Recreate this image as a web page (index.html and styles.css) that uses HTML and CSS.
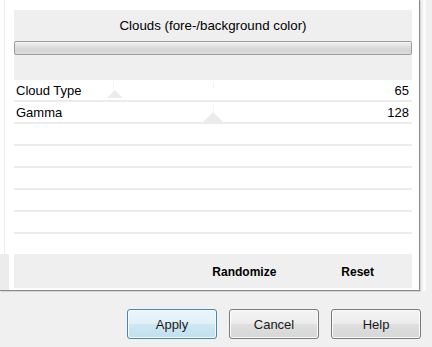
FILE: index.html
```html
<!DOCTYPE html>
<html lang="en">
<head>
  <meta charset="UTF-8" />
  <title>Clouds</title>
  <link rel="stylesheet" href="styles.css">
</head>
<body>
  <div class="top">
    <div class="panel">
      <div class="gutter">
        <div class="gutter-line"></div>
        <div class="gutter-foot"></div>
      </div>

      <div class="content">
        <div class="header">
          <div class="title">Clouds (fore-/background color)</div>
          <div class="bar"></div>
        </div>

        <div class="rows">
          <div class="row">
            <span>Cloud Type</span><span>65</span>
            <i class="tick" style="left: 99px"></i>
            <i class="thumb" style="left: 93px"></i>
            <i class="tick" style="left: 199px"></i>
          </div>
          <div class="row">
            <span>Gamma</span><span>128</span>
            <i class="tick" style="left: 199px"></i>
            <i class="thumb big" style="left: 189px"></i>
          </div>
          <div class="row"></div>
          <div class="row"></div>
          <div class="row"></div>
          <div class="row"></div>
          <div class="row"></div>
          <div class="row"></div>
        </div>

        <div class="footer">
          <span>Randomize</span>
          <span>Reset</span>
        </div>
      </div>
    </div>
    <div class="edge"></div>
  </div>

  <div class="buttons">
    <button class="btn default">Apply</button>
    <button class="btn">Cancel</button>
    <button class="btn">Help</button>
  </div>
</body>
</html>
```

FILE: styles.css
```css
body {
  margin: 0;
  width: 432px;
  height: 347px;
  overflow: hidden;
  background: #f0f0f0;
  font-family: 'Liberation Sans', Arial, sans-serif;
  font-size: 13px;
  color: #000;
}

.top {
  display: flex;
  height: 291px;
}

.panel {
  display: flex;
  width: 419px;
  height: 290px;
  background: #fff;
  border-right: 1px solid #8a8a8a;
  border-bottom: 1px solid #8a8a8a;
  box-shadow: 1px 1px 0 #d6d6d6;
}

.gutter {
  width: 14px;
  display: flex;
  flex-direction: column;
}

.gutter-line {
  flex: 1;
  margin-left: 4px;
  border-left: 1px solid #ececec;
}

.gutter-foot {
  width: 9px;
  height: 36px;
  background: #ececec;
}

.content {
  width: 398px;
  padding-top: 10px;
  padding-bottom: 2px;
}

.header {
  height: 62px;
  padding-top: 8px;
  background: #efefef;
}

.title {
  text-align: center;
  line-height: 16px;
  font-size: 13.3px;
}

.bar {
  margin-top: 7px;
  height: 12px;
  border: 1px solid #9c9c9c;
  border-radius: 2px;
  background: linear-gradient(#f4f4f4, #dcdcdc 45%, #d4d4d4 70%, #dedede);
}

.row {
  position: relative;
  display: flex;
  justify-content: space-between;
  align-items: center;
  height: 20px;
  padding: 0 3px 0 2px;
  border-bottom: 2px solid #ececec;
}

.row:last-child {
  border-bottom: none;
}

.tick {
  position: absolute;
  top: 2px;
  width: 1px;
  height: 7px;
  background: #f4f4f4;
}

.thumb {
  position: absolute;
  bottom: 2px;
  width: 0;
  height: 0;
  border-left: 8px solid transparent;
  border-right: 8px solid transparent;
  border-bottom: 8px solid #ebebeb;
}

.thumb.big {
  bottom: 0;
  border-left-width: 10px;
  border-right-width: 10px;
  border-bottom-width: 10px;
}

.footer {
  display: flex;
  justify-content: flex-end;
  align-items: center;
  gap: 65px;
  height: 32px;
  padding-top: 2px;
  padding-right: 38px;
  background: #efefef;
  font-size: 12px;
  font-weight: bold;
}

.edge {
  width: 3px;
  margin-left: 3px;
  background: #fbfbfb;
}

.buttons {
  display: flex;
  justify-content: flex-end;
  gap: 12px;
  margin-top: 18px;
  padding-right: 11px;
}

.btn {
  width: 90px;
  height: 30px;
  padding: 0;
  font-family: 'Liberation Sans', Arial, sans-serif;
  font-size: 13px;
  color: #1a1a1a;
  border: 1px solid #7a7a7a;
  border-radius: 3px;
  background: linear-gradient(#f4f4f4, #ececec 48%, #dfdfdf 52%, #d6d6d6);
  box-shadow: inset 0 0 0 1px #fcfcfc;
}

.btn.default {
  border-color: #4a86b0;
  background: linear-gradient(#eaf5fb, #e0f0f8 48%, #cfe7f3 52%, #c1dfee);
  box-shadow: inset 0 0 0 1px #f4fbfe;
}
```
